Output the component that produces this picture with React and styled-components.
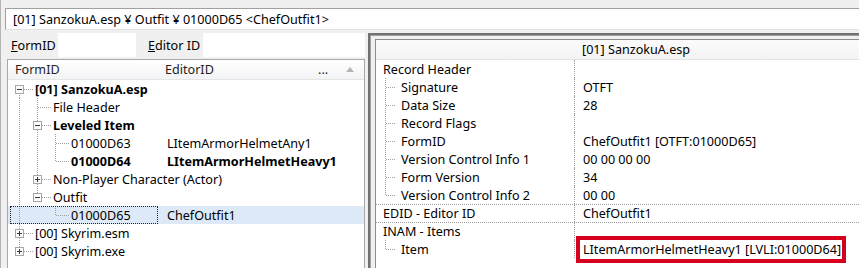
import styled, { createGlobalStyle } from 'styled-components'

const GlobalStyle = createGlobalStyle`
  html, body {
    margin: 0;
    padding: 0;
    background: #f0f0f0;
  }
  body {
    font-family: "Noto Sans", "Liberation Sans", sans-serif;
    font-size: 12.6px;
    color: #000;
  }
  * {
    box-sizing: border-box;
  }
`

const LINE = '#a0a0a0'

const Window = styled.div`
  width: 859px;
  height: 268px;
  overflow: hidden;
  border-left: 1px solid #b4b4b4;
  padding: 8px 0 0 4px;
  display: flex;
  flex-direction: column;
`

const PathBar = styled.div`
  height: 22px;
  margin-right: -4px;
  background: #fff;
  border-top: 1px solid #a0a0a0;
  border-left: 1px solid #a0a0a0;
  border-bottom: 1px solid #e3e3e3;
  padding-left: 7px;
  display: flex;
  align-items: center;
  white-space: nowrap;
`

const Body = styled.div`
  flex: 1;
  min-height: 0;
  display: flex;
  margin-top: 3px;
`

const LeftPane = styled.div`
  width: 360px;
  flex-shrink: 0;
  display: flex;
  flex-direction: column;
`

const FilterRow = styled.div`
  height: 26px;
  display: flex;
  align-items: flex-start;
`

const FilterLabel = styled.label`
  width: ${p => p.width}px;
  height: 24px;
  padding-left: ${p => p.indent}px;
  display: flex;
  align-items: center;
  white-space: nowrap;
  & u {
    text-decoration: underline;
  }
`

const FilterInput = styled.div`
  height: 24px;
  background: #fff;
  ${p => (p.width ? `width: ${p.width}px;` : 'flex: 1;')}
`

const List = styled.div`
  flex: 1;
  margin-left: 2px;
  width: 358px;
  background: #fff;
  border: 1px solid #a8a8a8;
  border-bottom: none;
`

const ListHeader = styled.div`
  height: 20px;
  display: flex;
  align-items: center;
  border-bottom: 1px solid #e5e5e5;
  background: linear-gradient(#ffffff, #f2f3f5);
`

const HeaderCell = styled.div`
  width: ${p => p.width}px;
  padding-left: ${p => p.indent}px;
  display: flex;
  align-items: center;
  gap: 18px;
  white-space: nowrap;
  color: #1e1e1e;
`

const TreeRow = styled.div`
  height: 18px;
  display: flex;
  align-items: center;
  background: ${p => (p.selected ? '#dde9f7' : 'transparent')};
  font-weight: ${p => (p.bold ? 700 : 400)};
  white-space: nowrap;
`

const NameCell = styled.div`
  width: 148px;
  height: 18px;
  margin-left: 2px;
  flex-shrink: 0;
  display: flex;
  align-items: center;
  outline: ${p => (p.focused ? '1px dotted #222' : 'none')};
  outline-offset: -1px;
`

const EditorCell = styled.div`
  flex: 1;
  padding-left: 9px;
`

const Glyph = styled.svg`
  display: block;
  flex-shrink: 0;
`

const RightPane = styled.div`
  flex: 1;
  min-width: 0;
  margin-left: 3px;
  border-top: 2px solid #717171;
  border-left: 2px solid #717171;
  display: flex;
`

const RightInner = styled.div`
  flex: 1;
  border-top: 1px solid #a0a0a0;
  border-left: 1px solid #a0a0a0;
  padding: 3px 0 0 4px;
  display: flex;
`

const Grid = styled.div`
  flex: 1;
  margin-right: -4px;
  background: #fff;
  border-top: 1px solid #8c8c8c;
  border-left: 1px solid #8c8c8c;
`

const GridHeader = styled.div`
  height: 20px;
  display: flex;
  align-items: center;
  border-bottom: 1px solid #e3e3e3;
  background: linear-gradient(#fbfbfb, #f3f3f3);
  padding-left: 206px;
  white-space: nowrap;
`

const FieldRow = styled.div`
  height: 18px;
  display: flex;
  align-items: center;
  white-space: nowrap;
  border-top: ${p => (p.divider ? `1px dotted ${LINE}` : 'none')};
`

const FieldLabel = styled.div`
  width: 199px;
  height: 100%;
  flex-shrink: 0;
  display: flex;
  align-items: center;
  padding-left: ${p => (p.child ? 9 : 7)}px;
  border-right: 1px dotted ${LINE};
`

const FieldValue = styled.div`
  flex: 1;
  height: 100%;
  display: flex;
  align-items: center;
  padding-left: 8px;
`

const Marked = styled.span`
  display: inline-flex;
  align-items: center;
  height: 27px;
  margin-left: -7px;
  padding: 0 1px 0 3px;
  border: 4px solid #d7001f;
  background: #fff;
`

const TreeGlyph = ({ top, bottom, toggle }) => (
  <Glyph width="25" height="18" viewBox="0 0 25 18" shapeRendering="crispEdges">
    {(top || bottom) && (
      <line x1="9.5" y1={top ? 0 : 9} x2="9.5" y2={bottom ? 18 : 10} stroke={LINE} strokeDasharray="1 1" />
    )}
    <line x1={toggle ? 14 : 10} y1="9.5" x2="23" y2="9.5" stroke={LINE} strokeDasharray="1 1" />
    {toggle && (
      <g>
        <rect x="5.5" y="5.5" width="8" height="8" fill="#fbfbfb" stroke="#a6a6a6" />
        <line x1="7" y1="9.5" x2="12" y2="9.5" stroke="#3a3a3a" />
        {toggle === 'plus' && <line x1="9.5" y1="7" x2="9.5" y2="12" stroke="#3a3a3a" />}
      </g>
    )}
  </Glyph>
)

const Guide = ({ on }) => (
  <Glyph width="18" height="18" viewBox="0 0 18 18" shapeRendering="crispEdges">
    {on && <line x1="9.5" y1="0" x2="9.5" y2="18" stroke={LINE} strokeDasharray="1 1" />}
  </Glyph>
)

const Branch = ({ last }) => (
  <Glyph width="16" height="18" viewBox="0 0 16 18" shapeRendering="crispEdges">
    <line x1="0.5" y1="0" x2="0.5" y2={last ? 10 : 18} stroke={LINE} strokeDasharray="1 1" />
    <line x1="1" y1="9.5" x2="11" y2="9.5" stroke={LINE} strokeDasharray="1 1" />
  </Glyph>
)

const records = [
  { guides: [], top: false, bottom: true, toggle: 'minus', id: '[01] SanzokuA.esp', bold: true },
  { guides: [true], top: true, bottom: true, id: 'File Header' },
  { guides: [true], top: true, bottom: true, toggle: 'minus', id: 'Leveled Item', bold: true },
  { guides: [true, true], top: true, bottom: true, id: '01000D63', editor: 'LItemArmorHelmetAny1' },
  { guides: [true, true], top: true, bottom: false, id: '01000D64', editor: 'LItemArmorHelmetHeavy1', bold: true },
  { guides: [true], top: true, bottom: true, toggle: 'plus', id: 'Non-Player Character (Actor)' },
  { guides: [true], top: true, bottom: false, toggle: 'minus', id: 'Outfit' },
  { guides: [true, false], top: true, bottom: false, id: '01000D65', editor: 'ChefOutfit1', selected: true },
  { guides: [], top: true, bottom: true, toggle: 'plus', id: '[00] Skyrim.esm' },
  { guides: [], top: true, bottom: false, toggle: 'plus', id: '[00] Skyrim.exe' },
]

const fields = [
  { label: 'Record Header' },
  { label: 'Signature', value: 'OTFT', child: true },
  { label: 'Data Size', value: '28', child: true },
  { label: 'Record Flags', child: true },
  { label: 'FormID', value: 'ChefOutfit1 [OTFT:01000D65]', child: true },
  { label: 'Version Control Info 1', value: '00 00 00 00', child: true },
  { label: 'Form Version', value: '34', child: true },
  { label: 'Version Control Info 2', value: '00 00', child: true, last: true },
  { label: 'EDID - Editor ID', value: 'ChefOutfit1', divider: true },
  { label: 'INAM - Items', divider: true },
  { label: 'Item', value: 'LItemArmorHelmetHeavy1 [LVLI:01000D64]', child: true, last: true, marked: true },
]

const App = () => {
  return (
    <>
      <GlobalStyle />
      <Window>
        <PathBar>[01] SanzokuA.esp ¥ Outfit ¥ 01000D65 &lt;ChefOutfit1&gt;</PathBar>
        <Body>
          <LeftPane>
            <FilterRow>
              <FilterLabel width={53} indent={6}><u>F</u>ormID</FilterLabel>
              <FilterInput width={78} />
              <FilterLabel width={67} indent={12}><u>E</u>ditor ID</FilterLabel>
              <FilterInput />
            </FilterRow>
            <List>
              <ListHeader>
                <HeaderCell width={150} indent={7}>FormID</HeaderCell>
                <HeaderCell width={150} indent={7}>EditorID</HeaderCell>
                <HeaderCell indent={10}>
                  <span>...</span>
                  <svg width="8" height="5" viewBox="0 0 8 5">
                    <path d="M0 5 L4 0 L8 5 Z" fill="#b4b4b4" />
                  </svg>
                </HeaderCell>
              </ListHeader>
              {records.map((r, i) => (
                <TreeRow key={`rec_${i}`} selected={r.selected} bold={r.bold}>
                  <NameCell focused={r.selected}>
                    {r.guides.map((on, g) => <Guide key={g} on={on} />)}
                    <TreeGlyph top={r.top} bottom={r.bottom} toggle={r.toggle} />
                    <span>{r.id}</span>
                  </NameCell>
                  {r.editor && <EditorCell>{r.editor}</EditorCell>}
                </TreeRow>
              ))}
            </List>
          </LeftPane>
          <RightPane>
            <RightInner>
              <Grid>
                <GridHeader>[01] SanzokuA.esp</GridHeader>
                {fields.map((f, i) => (
                  <FieldRow key={`field_${i}`} divider={f.divider}>
                    <FieldLabel child={f.child}>
                      {f.child && <Branch last={f.last} />}
                      <span>{f.label}</span>
                    </FieldLabel>
                    <FieldValue>
                      {f.marked ? <Marked>{f.value}</Marked> : f.value}
                    </FieldValue>
                  </FieldRow>
                ))}
              </Grid>
            </RightInner>
          </RightPane>
        </Body>
      </Window>
    </>
  )
}

export default App
